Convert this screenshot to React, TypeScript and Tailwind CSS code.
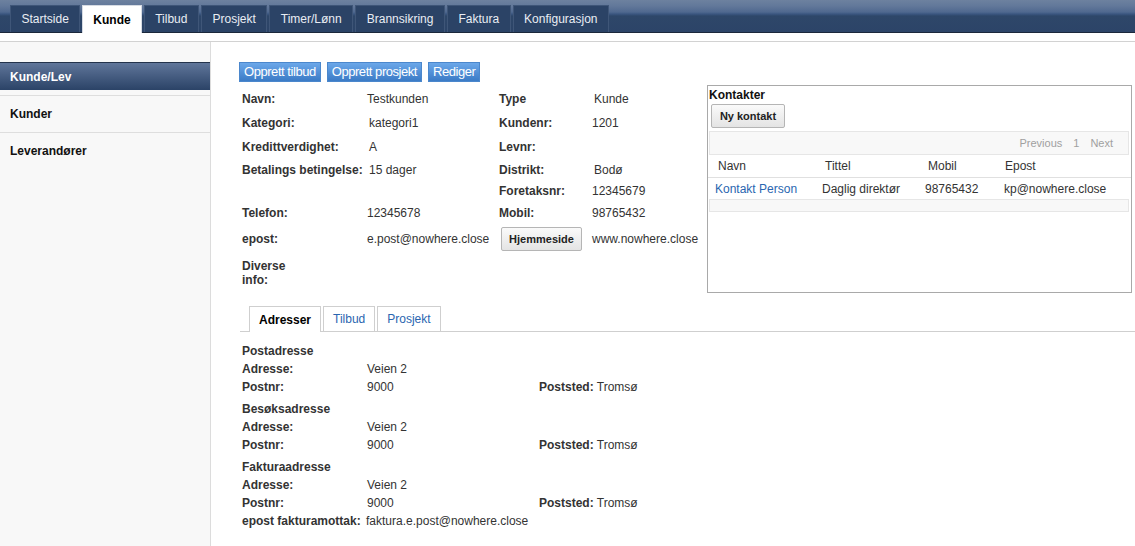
import React from "react";

const navTabs = ["Startside", "Kunde", "Tilbud", "Prosjekt", "Timer/Lønn", "Brannsikring", "Faktura", "Konfigurasjon"];

function InfoRow({ h, l1, v1, l2, v2, v1Indent, v2Indent, extra }: { h: string; l1?: React.ReactNode; v1?: React.ReactNode; l2?: React.ReactNode; v2?: React.ReactNode; v1Indent?: boolean; v2Indent?: boolean; extra?: React.ReactNode }) {
  return (
    <div className={`flex items-center ${h}`}>
      <div className="w-[125px] font-bold leading-[14px]">{l1}</div>
      <div className={`w-[132px] ${v1Indent ? "pl-[2px]" : ""}`}>{v1}</div>
      <div className="w-[93px] font-bold">{extra ?? l2}</div>
      <div className={`flex-1 ${v2Indent ? "pl-[2px]" : ""}`}>{v2}</div>
    </div>
  );
}

function AddrBlock({ title }: { title: string }) {
  return (
    <div>
      <div className="h-[17px] leading-[17px] font-bold">{title}</div>
      <div className="flex h-[18px] leading-[18px]">
        <div className="w-[125px] font-bold">Adresse:</div>
        <div>Veien 2</div>
      </div>
      <div className="flex h-[18px] leading-[18px]">
        <div className="w-[125px] font-bold">Postnr:</div>
        <div className="w-[172px]">9000</div>
        <div>
          <span className="font-bold">Poststed:</span> Tromsø
        </div>
      </div>
    </div>
  );
}

export default function App() {
  return (
    <div className="w-[1135px] h-[546px] overflow-hidden bg-white text-[#333] text-[12px] flex flex-col font-['Liberation_Sans',Arial,sans-serif]">
      {/* Top nav */}
      <div className="h-[33px] shrink-0 border-b border-[#1b283b] bg-[linear-gradient(to_bottom,#6d819f_0px,#62789a_6px,#50698f_12px,#3b5680_14px,#2e4769_16px,#2c4468_100%)] flex items-end pl-[10px] gap-[2px]">
        {navTabs.map((t) =>
          t === "Kunde" ? (
            <div key={t} className="relative z-10 -mb-px h-[28px] px-[10px] flex items-center bg-white border border-b-0 border-[#d6dbe3] text-black font-bold">
              {t}
            </div>
          ) : (
            <div key={t} className="h-[27px] px-[10.5px] flex items-center bg-[#2b4366] border border-b-0 border-[#3f5678] text-[#e9edf3]">
              {t}
            </div>
          )
        )}
      </div>
      <div className="h-[9px] shrink-0 border-b border-[#d2d2d2]" />

      <div className="flex flex-1 min-h-0">
        {/* Sidebar */}
        <div className="w-[211px] shrink-0 bg-[#f8f8f8] border-r border-[#dcdcdc] pt-[20px]">
          <div className="h-[28px] flex items-center pl-[10px] text-white font-bold border-t border-[#23334b] bg-gradient-to-b from-[#60769a] to-[#2b4367]">
            Kunde/Lev
          </div>
          <div className="mt-[5px] border-t border-[#dedede]">
            <div className="h-[37px] flex items-center pl-[10px] font-bold text-[#111] border-b border-[#dedede]">Kunder</div>
            <div className="h-[36px] flex items-center pl-[10px] font-bold text-[#111]">Leverandører</div>
          </div>
        </div>

        {/* Main */}
        <div className="flex-1 pl-[28px] pr-[4px] pt-[20px]">
          <div className="flex gap-[6px]">
            {["Opprett tilbud", "Opprett prosjekt", "Rediger"].map((b) => (
              <div key={b} className="h-[20px] px-[4px] flex items-center text-[13px] tracking-[-0.45px] text-white border border-[#4b87cc] bg-gradient-to-b from-[#6ba7e9] to-[#3b7bc6]">
                {b}
              </div>
            ))}
          </div>

          <div className="flex mt-[3px]">
            {/* Info table */}
            <div className="w-[468px] pl-[3px] pt-[2px]">
              <InfoRow h="h-[24px]" l1="Navn:" v1="Testkunden" l2="Type" v2="Kunde" v2Indent />
              <InfoRow h="h-[24px]" l1="Kategori:" v1="kategori1" v1Indent l2="Kundenr:" v2="1201" />
              <InfoRow h="h-[24px]" l1="Kredittverdighet:" v1="A" v1Indent l2="Levnr:" />
              <InfoRow h="h-[22px]" l1="Betalings betingelse:" v1="15 dager" v1Indent l2="Distrikt:" v2="Bodø" v2Indent />
              <InfoRow h="h-[20px]" l2="Foretaksnr:" v2="12345679" />
              <InfoRow h="h-[24px]" l1="Telefon:" v1="12345678" l2="Mobil:" v2="98765432" />
              <InfoRow
                h="h-[28px]"
                l1="epost:"
                v1="e.post@nowhere.close"
                extra={
                  <div className="w-[81px] h-[24px] ml-[2px] flex items-center justify-center text-[11px] font-bold text-[#222] rounded-[2px] border border-[#b5b5b5] bg-gradient-to-b from-[#fafafa] to-[#e4e4e4]">
                    Hjemmeside
                  </div>
                }
                v2="www.nowhere.close"
              />
              <div className="h-[40px] flex items-center">
                <div className="font-bold leading-[14px]">
                  Diverse
                  <br />
                  info:
                </div>
              </div>
            </div>

            {/* Kontakter */}
            <div className="w-[425px] h-[208px] border border-[#a9a9a9] flex flex-col">
              <div className="pl-[1px] pt-[2px] leading-[14px] font-bold text-[#111]">Kontakter</div>
              <div className="ml-[3px] mt-[2px] w-[74px] h-[24px] flex items-center justify-center text-[11px] font-bold text-[#222] rounded-[2px] border border-[#b5b5b5] bg-gradient-to-b from-[#fafafa] to-[#e4e4e4]">
                Ny kontakt
              </div>
              <div className="mt-[3px] ml-[1px] mr-[2px] h-[24px] bg-[#f8f8f8] border border-[#e6e6e6] flex items-center justify-end pr-[15px] text-[11px] text-[#a0a0a0] gap-[11px]">
                <span>Previous</span>
                <span>1</span>
                <span>Next</span>
              </div>
              <div className="flex h-[23px] items-center border-b border-[#e0e0e0] pl-[10px]">
                <div className="w-[107px]">Navn</div>
                <div className="w-[103px]">Tittel</div>
                <div className="w-[77px]">Mobil</div>
                <div className="flex-1">Epost</div>
              </div>
              <div className="flex h-[21px] items-center pl-[7px]">
                <div className="w-[107px] text-[#2a66b0]">Kontakt Person</div>
                <div className="w-[103px]">Daglig direktør</div>
                <div className="w-[79px]">98765432</div>
                <div className="flex-1">kp@nowhere.close</div>
              </div>
              <div className="ml-[1px] mr-[2px] h-[13px] bg-[#f8f8f8] border border-[#e6e6e6]" />
            </div>
          </div>

          {/* Sub tabs */}
          <div className="mt-[13px] -mr-[4px] ml-[1px] border-b border-[#cfcfcf] flex items-end gap-[2px] pl-[9px]">
            <div className="relative -mb-px h-[26px] px-[9px] flex items-center font-bold text-black bg-white border border-b-0 border-[#cfcfcf]">
              Adresser
            </div>
            <div className="h-[25px] px-[9px] flex items-center text-[#2a66b0] border border-b-0 border-[#cfcfcf]">Tilbud</div>
            <div className="h-[25px] px-[9px] flex items-center text-[#2a66b0] border border-b-0 border-[#cfcfcf]">Prosjekt</div>
          </div>

          {/* Addresses */}
          <div className="pl-[3px] mt-[11px] flex flex-col gap-[5px]">
            <AddrBlock title="Postadresse" />
            <AddrBlock title="Besøksadresse" />
            <div>
              <AddrBlock title="Fakturaadresse" />
              <div className="flex h-[18px] leading-[18px]">
                <div className="w-[124px] font-bold">epost fakturamottak:</div>
                <div>faktura.e.post@nowhere.close</div>
              </div>
            </div>
          </div>
        </div>
      </div>
    </div>
  );
}
